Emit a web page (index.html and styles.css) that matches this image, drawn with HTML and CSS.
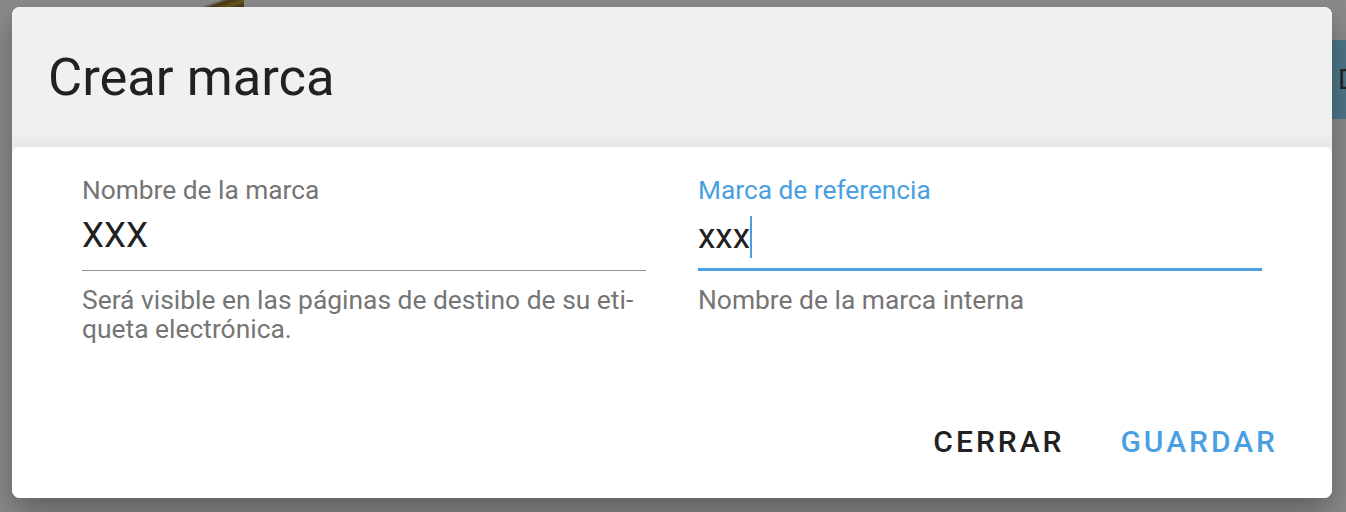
FILE: index.html
```html
<!DOCTYPE html>
<html lang="es">
<head>
  <meta charset="UTF-8" />
  <meta name="viewport" content="width=device-width, initial-scale=1.0"/>
  <title>Crear marca</title>
  <link rel="stylesheet" href="styles.css">
</head>
<body>
  <div class="behind-thumb"></div>
  <div class="behind-button">D</div>

  <div class="dialog">
    <div class="dialog-header">
      <h2>Crear marca</h2>
    </div>
    <div class="dialog-body">
      <div class="fields">
        <div class="field">
          <label>Nombre de la marca</label>
          <div class="value">XXX</div>
          <div class="line"></div>
          <div class="helper">Será visible en las páginas de destino de su eti-<br>queta electrónica.</div>
        </div>
        <div class="field focused">
          <label>Marca de referencia</label>
          <div class="value">xxx<span class="caret"></span></div>
          <div class="line"></div>
          <div class="helper">Nombre de la marca interna</div>
        </div>
      </div>
      <div class="actions">
        <button class="btn">CERRAR</button>
        <button class="btn primary">GUARDAR</button>
      </div>
    </div>
  </div>
</body>
</html>
```

FILE: styles.css
```css
html, body {
  margin: 0;
  height: 512px;
  overflow: hidden;
}
body {
  font-family: Roboto, "Liberation Sans", sans-serif;
  background-color: #8a8a8a;
  position: relative;
}
.behind-thumb {
  position: absolute;
  left: 200px;
  top: 0;
  width: 44px;
  height: 8px;
  background: linear-gradient(160deg, #8a8a8a 30%, #4a3a14 45%, #6b5520 70%, #2e2410 100%);
}
.behind-button {
  position: absolute;
  left: 1332px;
  top: 40px;
  width: 40px;
  height: 79px;
  background-color: #4d7689;
  color: #222;
  font-size: 28px;
  line-height: 79px;
  padding-left: 6px;
}
.dialog {
  position: relative;
  margin: 7px 0 0 12px;
  width: 1320px;
  border-radius: 8px;
  background-color: #f0f0f0;
  box-shadow: 0 14px 30px rgba(0,0,0,0.3);
}
.dialog-header {
  height: 140px;
  padding-left: 36px;
  box-sizing: border-box;
  background: linear-gradient(#f0f0f0 90%, #e6e6e6);
  border-radius: 8px 8px 0 0;
}
.dialog-header h2 {
  margin: 0;
  padding-top: 42px;
  font-size: 52.5px;
  font-weight: 400;
  line-height: 56px;
  color: #212121;
}
.dialog-body {
  background: white;
  border-radius: 8px;
  height: 351px;
  padding: 28px 70px 0;
  box-sizing: border-box;
}
.fields {
  display: grid;
  grid-template-columns: 564px 564px;
  column-gap: 52px;
}
.field label {
  display: block;
  font-size: 26.3px;
  line-height: 30px;
  color: #757575;
}
.field .value {
  margin-top: 11px;
  font-size: 35px;
  line-height: 40px;
  color: #212121;
  height: 40px;
}
.field .line {
  margin-top: 14px;
  height: 1px;
  background-color: #949494;
  margin-bottom: 2px;
}
.field.focused .line {
  height: 3px;
  margin-top: 12px;
  background-color: #4a9fe3;
}
.field.focused label {
  color: #4a9fe3;
}
.caret {
  display: inline-block;
  width: 2px;
  height: 42px;
  background-color: #4a9fe3;
  vertical-align: -10px;
}
.helper {
  margin-top: 15px;
  font-size: 26.4px;
  line-height: 29px;
  color: #757575;
}
.actions {
  display: flex;
  justify-content: flex-end;
  gap: 56px;
  margin-top: 78px;
  margin-right: -16px;
}
.btn {
  background: none;
  border: none;
  font-family: Roboto, "Liberation Sans", sans-serif;
  font-size: 30px;
  font-weight: 500;
  letter-spacing: 3px;
  line-height: 40px;
  color: #212121;
  padding: 0;
  cursor: pointer;
}
.btn.primary {
  color: #4a9fe3;
}
```
